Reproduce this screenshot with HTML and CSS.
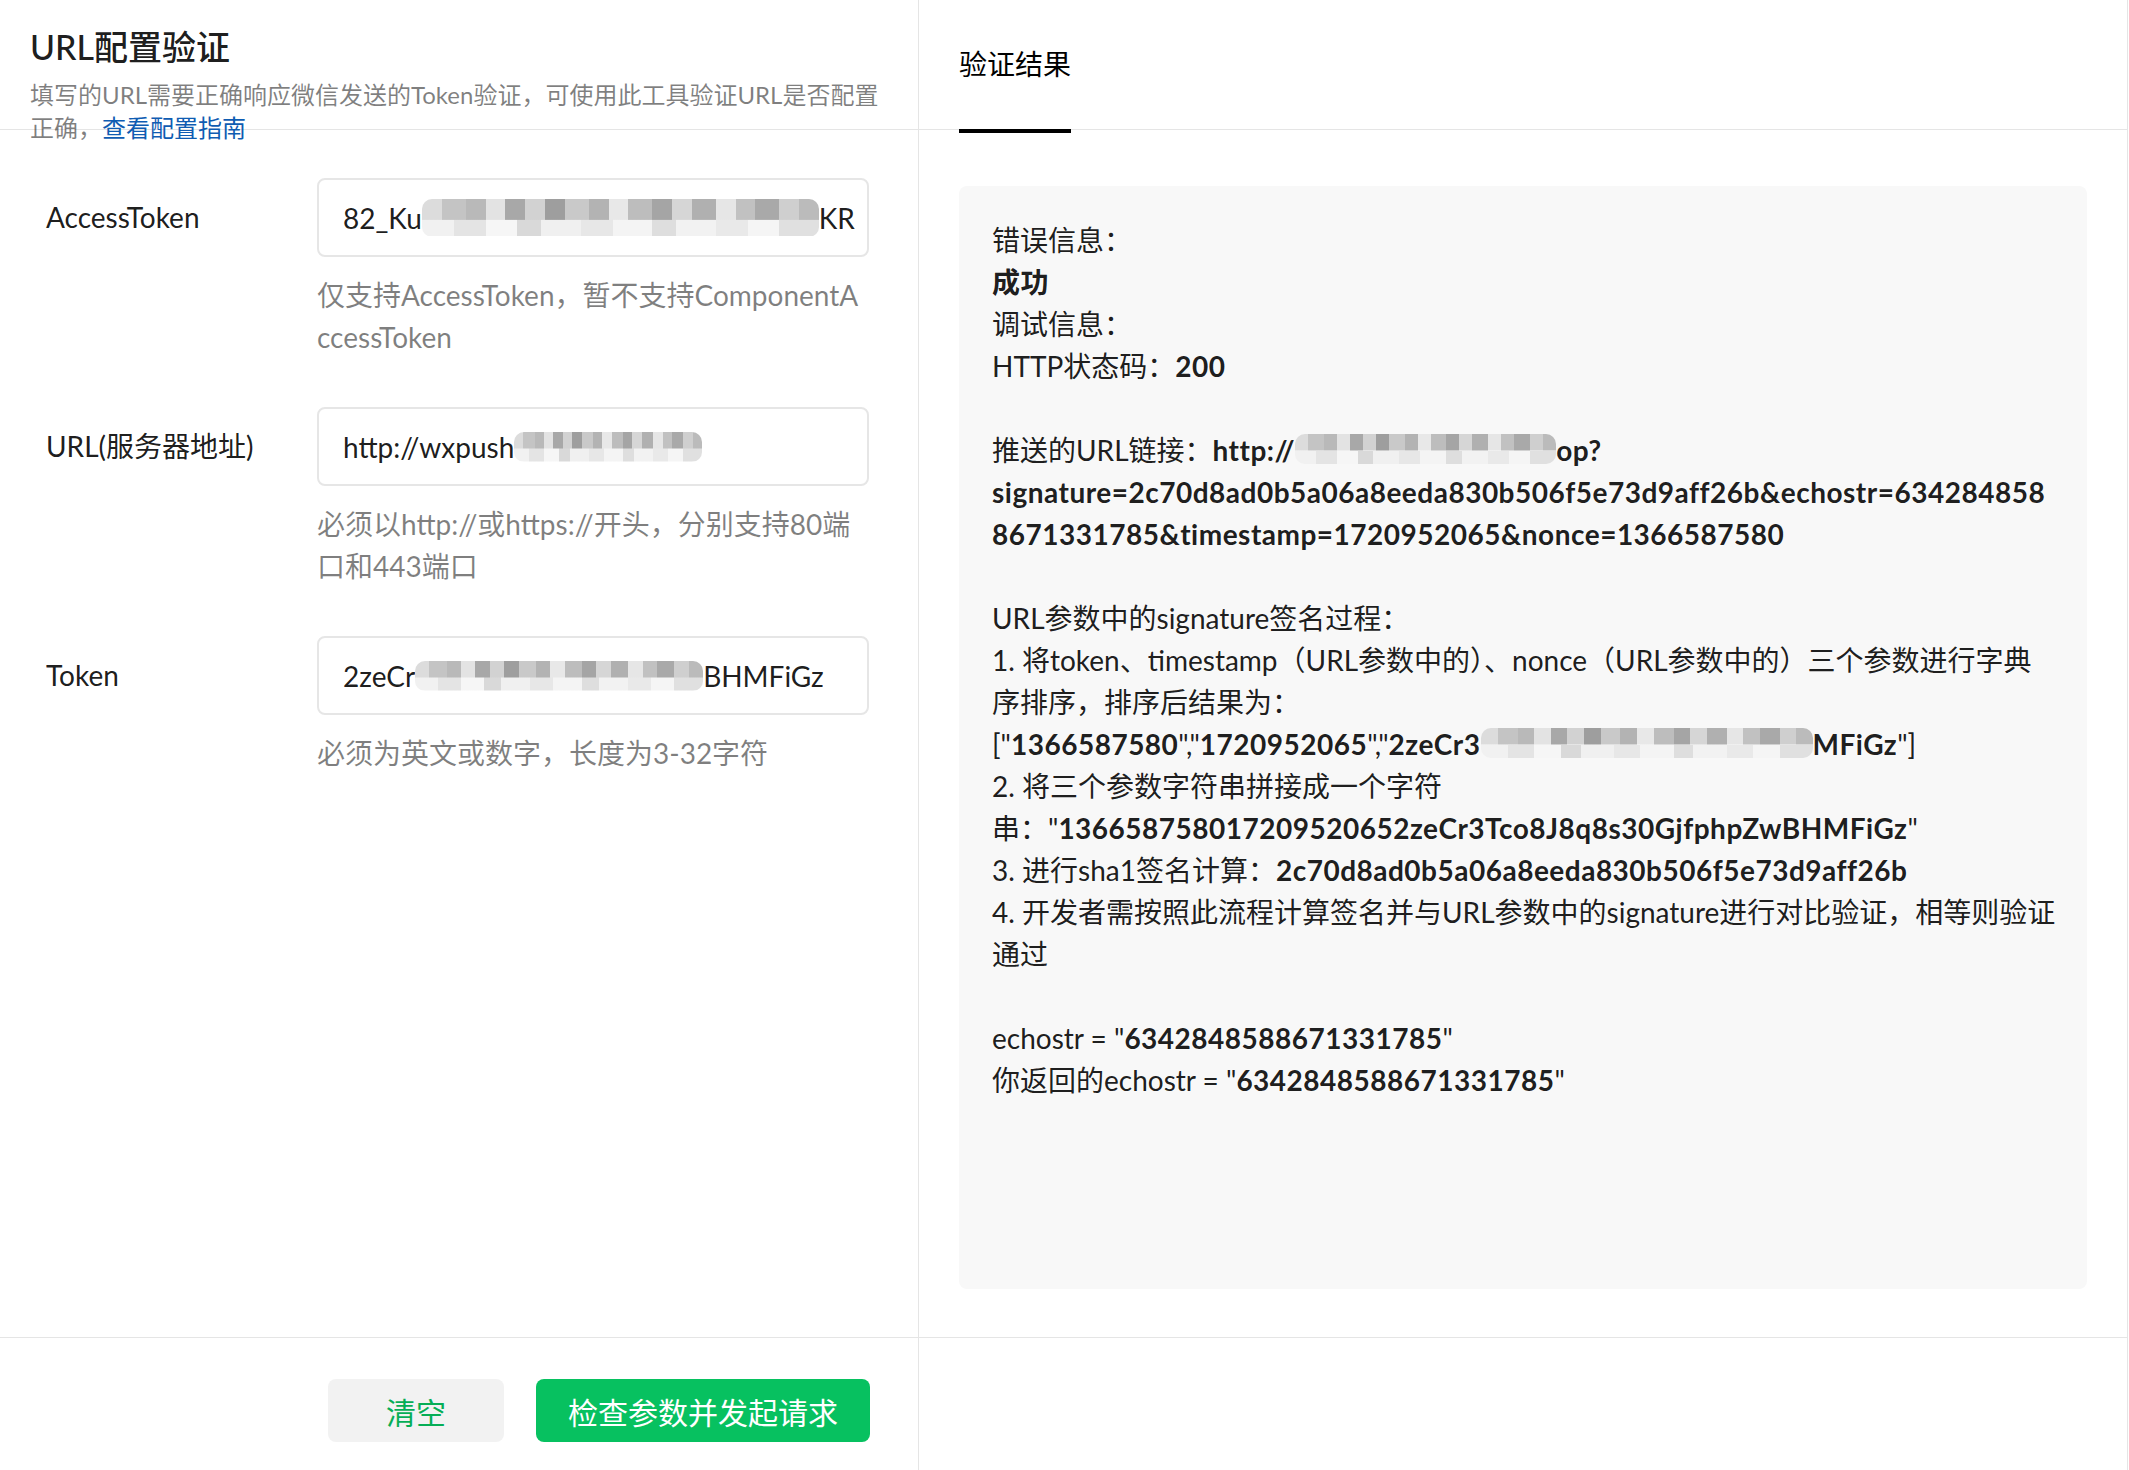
FILE: index.html
```html
<!DOCTYPE html>
<html lang="zh-CN">
<head>
<meta charset="utf-8">
<title>URL配置验证</title>
<link rel="stylesheet" href="styles.css">
</head>
<body>
<div class="page">
  <section class="col col-form">
    <header class="form-head">
      <h1 class="title">URL配置验证</h1>
      <p class="desc">填写的URL需要正确响应微信发送的Token验证，可使用此工具验证URL是否配置正确，<a class="link" href="#">查看配置指南</a></p>
    </header>
    <div class="form-body">
      <div class="field">
        <label class="field-label">AccessToken</label>
        <div class="input"><span>82_Ku</span><span class="mosaic m-in1"></span><span>KR</span></div>
        <p class="hint">仅支持AccessToken，暂不支持ComponentAccessToken</p>
      </div>
      <div class="field">
        <label class="field-label">URL(服务器地址)</label>
        <div class="input"><span>http://wxpush</span><span class="mosaic m-in2"></span></div>
        <p class="hint">必须以http://或https://开头，分别支持80端口和443端口</p>
      </div>
      <div class="field">
        <label class="field-label">Token</label>
        <div class="input"><span>2zeCr</span><span class="mosaic m-in3"></span><span>BHMFiGz</span></div>
        <p class="hint">必须为英文或数字，长度为3-32字符</p>
      </div>
    </div>
    <footer class="form-foot">
      <button class="btn btn-default" type="button">清空</button>
      <button class="btn btn-primary" type="button">检查参数并发起请求</button>
    </footer>
  </section>
  <section class="col col-result">
    <header class="result-head"><span class="tab">验证结果</span></header>
    <div class="result-body">
      <div class="result-box">
        <p>错误信息：<br><b>成功</b><br>调试信息：<br>HTTP状态码：<b>200</b></p>
        <p>推送的URL链接：<b>http://<span class="mosaic m-url"></span>op?signature=2c70d8ad0b5a06a8eeda830b506f5e73d9aff26b&amp;echostr=6342848588671331785&amp;timestamp=1720952065&amp;nonce=1366587580</b></p>
        <p>URL参数中的signature签名过程：<br>1. 将token、timestamp（URL参数中的）、nonce（URL参数中的）三个参数进行字典序排序，排序后结果为：<span class="nw">["<b>1366587580</b>","<b>1720952065</b>","<b>2zeCr3</b><span class="mosaic m-arr"></span><b>MFiGz</b>"]</span><br>2. 将三个参数字符串拼接成一个字符串："<b>136658758017209520652zeCr3Tco8J8q8s30GjfphpZwBHMFiGz</b>"<br>3. 进行sha1签名计算：<b>2c70d8ad0b5a06a8eeda830b506f5e73d9aff26b</b><br>4. 开发者需按照此流程计算签名并与URL参数中的signature进行对比验证，相等则验证通过</p>
        <p>echostr = "<b>6342848588671331785</b>"<br>你返回的echostr = "<b>6342848588671331785</b>"</p>
      </div>
    </div>
    <footer class="result-foot"></footer>
  </section>
</div>
</body>
</html>
```
FILE: styles.css
```css
html, body {
  margin: 0;
  padding: 0;
  background: #fff;
}
body {
  font-family: Lato, "Noto Sans CJK SC", sans-serif;
  color: rgba(0, 0, 0, 0.9);
}
.page {
  display: flex;
  width: 2128px;
  height: 1470px;
}
.col {
  display: flex;
  flex-direction: column;
  box-sizing: border-box;
  border-right: 1px solid #e5e5e5;
}
.col-form {
  width: 919px;
  flex: none;
}
.col-result {
  flex: 1;
  min-width: 0;
}
.form-head,
.result-head {
  flex: none;
  height: 130px;
  box-sizing: border-box;
  border-bottom: 1px solid #e5e5e5;
}
.form-head {
  padding: 23px 16px 0 30px;
}
.title {
  margin: 0;
  font-size: 34px;
  line-height: 48px;
  font-weight: 500;
  color: rgba(0, 0, 0, 0.9);
}
.desc {
  margin: 7px 0 0;
  font-size: 24px;
  line-height: 33px;
  color: rgba(0, 0, 0, 0.5);
}
.link {
  color: #0f5cb2;
  text-decoration: none;
}
.form-body {
  flex: 1;
  padding: 48px 49px 0 46px;
}
.field {
  display: grid;
  grid-template-columns: 271px 552px;
  margin-bottom: 49px;
}
.field-label {
  grid-column: 1;
  font-size: 28px;
  line-height: 79px;
}
.input {
  grid-column: 2;
  height: 79px;
  box-sizing: border-box;
  border: 2px solid #e6e6e6;
  border-radius: 8px;
  padding: 0 22px 0 24px;
  display: flex;
  align-items: center;
  font-size: 28px;
  white-space: nowrap;
  overflow: hidden;
}
.hint {
  grid-column: 2;
  margin: 17px 0 0;
  font-size: 28px;
  line-height: 42px;
  color: rgba(0, 0, 0, 0.5);
  word-break: break-all;
}
.form-foot {
  flex: none;
  height: 133px;
  box-sizing: border-box;
  border-top: 1px solid #e5e5e5;
  display: flex;
  justify-content: flex-end;
  align-items: flex-start;
  gap: 32px;
  padding: 41px 48px 0 0;
}
.btn {
  height: 63px;
  border: 0;
  border-radius: 8px;
  padding: 0;
  font-family: inherit;
  font-size: 30px;
  cursor: pointer;
}
.btn-default {
  width: 176px;
  background: #f2f2f2;
  color: #06ae56;
}
.btn-primary {
  width: 334px;
  background: #07c160;
  color: #fff;
}
.result-head {
  display: flex;
  align-items: flex-end;
  padding-left: 40px;
}
.tab {
  font-size: 28px;
  line-height: 42px;
  padding-bottom: 44px;
  border-bottom: 4px solid #000;
  margin-bottom: -4px;
  color: #000;
}
.result-body {
  flex: 1;
  display: flex;
  flex-direction: column;
  padding: 56px 40px 48px;
  min-height: 0;
}
.result-box {
  flex: 1;
  background: #f8f8f8;
  border-radius: 8px;
  padding: 33px 29px 33px 33px;
  font-size: 28px;
  line-height: 42px;
  overflow-wrap: break-word;
}
.result-box p {
  margin: 0 0 42px;
}
.result-box b {
  font-weight: 700;
  letter-spacing: 0.5px;
}
.nw {
  white-space: nowrap;
}
.result-foot {
  flex: none;
  height: 133px;
  box-sizing: border-box;
  border-top: 1px solid #e5e5e5;
}
.mosaic {
  display: inline-block;
  flex: none;
  vertical-align: -3px;
  height: 30px;
  border-radius: 10px;
  background:
    linear-gradient(90deg, #dcdcdc 0 5%, #c4c4c4 5% 11%, #b9b9b9 11% 16%, #e3e3e3 16% 21%, #a8a8a8 21% 26%, #d2d2d2 26% 31%, #9e9e9e 31% 36%, #c9c9c9 36% 42%, #b3b3b3 42% 47%, #e8e8e8 47% 52%, #bdbdbd 52% 58%, #a5a5a5 58% 63%, #d6d6d6 63% 68%, #b0b0b0 68% 74%, #e6e6e6 74% 79%, #c1c1c1 79% 84%, #a9a9a9 84% 90%, #cfcfcf 90% 95%, #bbbbbb 95% 100%) top / 100% 55% no-repeat,
    linear-gradient(90deg, #f1f1f1 0 8%, #e4e4e4 8% 16%, #f6f6f6 16% 24%, #d9d9d9 24% 30%, #f0f0f0 30% 40%, #e7e7e7 40% 48%, #f4f4f4 48% 58%, #dedede 58% 64%, #f2f2f2 64% 74%, #e9e9e9 74% 82%, #f5f5f5 82% 90%, #e0e0e0 90% 100%) bottom / 100% 45% no-repeat;
}
.m-in1 {
  width: 397px;
  height: 38px;
}
.m-in2 {
  width: 188px;
}
.m-in3 {
  width: 288px;
}
.m-url {
  width: 261px;
}
.m-arr {
  width: 332px;
}
```
